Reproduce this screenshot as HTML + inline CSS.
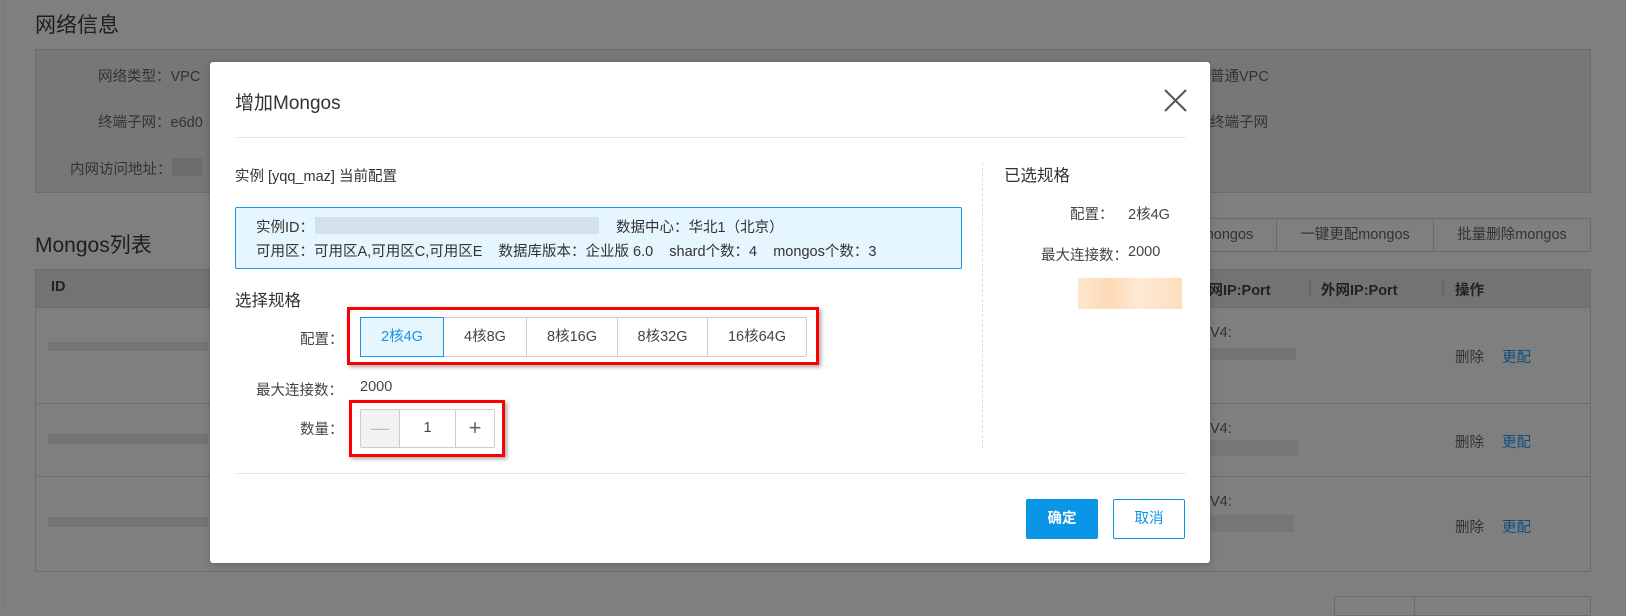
<!DOCTYPE html>
<html><head><meta charset="utf-8"><style>
*{margin:0;padding:0;box-sizing:border-box}
body{width:1626px;height:607px;overflow:hidden;background:#7f7f7f;font-family:"Liberation Sans","Noto Sans CJK SC",sans-serif;font-size:14.5px;color:#2a2a2a;position:relative}
.a{position:absolute;white-space:nowrap}
</style></head><body>
<div class="a" style="left:4px;top:0;width:1px;height:607px;background:#777"></div>
<div class="a" style="left:35px;top:9px;font-size:21px;color:#1e1e1e">网络信息</div>
<div class="a" style="left:35px;top:49px;width:1556px;height:144px;background:#777;border:1px solid #6c6c6c"></div>
<div class="a" style="left:98px;top:65px;color:#333">网络类型：VPC</div>
<div class="a" style="left:98px;top:111px;color:#333">终端子网：e6d0</div>
<div class="a" style="left:70px;top:158px;color:#333">内网访问地址：</div>
<div class="a" style="left:172px;top:158px;width:30px;height:18px;background:#6c6c6c"></div>
<div class="a" style="left:1210px;top:65px;color:#333">普通VPC</div>
<div class="a" style="left:1210px;top:111px;color:#333">终端子网</div>
<div class="a" style="left:35px;top:229px;font-size:21px;color:#1e1e1e">Mongos列表</div>
<div class="a" style="left:1120px;top:218px;width:157px;height:34px;border:1px solid #6a6a6a;text-align:center;line-height:32px;color:#333">批量增加mongos</div>
<div class="a" style="left:1276px;top:218px;width:158px;height:34px;border:1px solid #6a6a6a;text-align:center;line-height:32px;color:#333">一键更配mongos</div>
<div class="a" style="left:1433px;top:218px;width:158px;height:34px;border:1px solid #6a6a6a;text-align:center;line-height:32px;color:#333">批量删除mongos</div>
<div class="a" style="left:35px;top:269px;width:1556px;height:303px;border:1px solid #6c6c6c"></div>
<div class="a" style="left:36px;top:270px;width:1554px;height:38px;background:#737373;border-bottom:1px solid #6c6c6c"></div>
<div class="a" style="left:51px;top:279px;font-weight:bold;color:#222">ID</div>
<div class="a" style="left:1194px;top:279px;font-weight:bold;color:#222">内网IP:Port</div>
<div class="a" style="left:1309px;top:281px;width:2px;height:15px;background:#666"></div>
<div class="a" style="left:1321px;top:279px;font-weight:bold;color:#222">外网IP:Port</div>
<div class="a" style="left:1442px;top:281px;width:2px;height:15px;background:#666"></div>
<div class="a" style="left:1455px;top:279px;font-weight:bold;color:#222">操作</div>
<div class="a" style="left:36px;top:403px;width:1554px;height:1px;background:#6c6c6c"></div>
<div class="a" style="left:36px;top:476px;width:1554px;height:1px;background:#6c6c6c"></div>
<div class="a" style="left:48px;top:342px;width:160px;height:9px;background:#747474"></div>
<div class="a" style="left:48px;top:434px;width:160px;height:10px;background:#747474"></div>
<div class="a" style="left:48px;top:517px;width:160px;height:10px;background:#747474"></div>
<div class="a" style="left:1210px;top:325px;color:#333">V4:</div>
<div class="a" style="left:1210px;top:348px;width:86px;height:12px;background:#747474"></div>
<div class="a" style="left:1210px;top:421px;color:#333">V4:</div>
<div class="a" style="left:1210px;top:440px;width:88px;height:16px;background:#767676"></div>
<div class="a" style="left:1210px;top:494px;color:#333">V4:</div>
<div class="a" style="left:1210px;top:515px;width:84px;height:17px;background:#767676"></div>
<div class="a" style="left:1455px;top:346px;color:#333">删除</div><div class="a" style="left:1502px;top:346px;color:#0d4f80">更配</div>
<div class="a" style="left:1455px;top:431px;color:#333">删除</div><div class="a" style="left:1502px;top:431px;color:#0d4f80">更配</div>
<div class="a" style="left:1455px;top:516px;color:#333">删除</div><div class="a" style="left:1502px;top:516px;color:#0d4f80">更配</div>
<div class="a" style="left:1334px;top:596px;width:81px;height:20px;border:1px solid #6c6c6c"></div>
<div class="a" style="left:1414px;top:596px;width:177px;height:20px;border:1px solid #6c6c6c"></div>

<div class="a" style="left:210px;top:62px;width:1000px;height:501px;background:#fff;border-radius:3px;box-shadow:0 2px 8px rgba(0,0,0,.2)"></div>
<div class="a" style="left:235px;top:88px;font-size:19px;color:#333">增加Mongos</div>
<svg class="a" style="left:1164px;top:89px" width="23" height="23"><path d="M1 1L22 22M22 1L1 22" stroke="#555" stroke-width="2"/></svg>
<div class="a" style="left:235px;top:137px;width:951px;height:1px;background:#e8e8e8"></div>
<div class="a" style="left:235px;top:165px;color:#333">实例 [yqq_maz] 当前配置</div>
<div class="a" style="left:982px;top:163px;height:285px;border-left:1px dashed #ddd"></div>
<div class="a" style="left:1004px;top:162px;font-size:16.5px;color:#333">已选规格</div>
<div class="a" style="left:1070px;top:203px;color:#444">配置：</div><div class="a" style="left:1128px;top:203px;color:#444">2核4G</div>
<div class="a" style="left:1041px;top:244px;color:#444">最大连接数：</div><div class="a" style="left:1128px;top:244px;color:#444">2000</div>
<div class="a" style="left:1078px;top:278px;width:104px;height:31px;background:linear-gradient(90deg,#fde2c6,#fcd3a8 30%,#fde6cf 60%,#fdd7b0);opacity:.85"></div>
<div class="a" style="left:235px;top:207px;width:727px;height:62px;background:#e5f6fe;border:1px solid #1a93e3;border-radius:2px"></div>
<div class="a" style="left:256px;top:216px;color:#333">实例ID：</div>
<div class="a" style="left:315px;top:217px;width:284px;height:17px;background:#d3e1e8"></div>
<div class="a" style="left:616px;top:216px;color:#333">数据中心：华北1（北京）</div>
<div class="a" style="left:256px;top:240px;color:#333">可用区：可用区A,可用区C,可用区E &nbsp;&nbsp; 数据库版本：企业版 6.0 &nbsp;&nbsp; shard个数：4 &nbsp;&nbsp; mongos个数：3</div>
<div class="a" style="left:235px;top:287px;font-size:16.5px;color:#333">选择规格</div>
<div class="a" style="left:300px;top:328px;color:#444">配置：</div>
<div class="a" style="left:347px;top:307px;width:472px;height:58px;border:3px solid #f00;box-shadow:2px 2px 4px rgba(0,0,0,.35)"></div>
<div class="a" style="left:360px;top:317px;width:447px;height:40px;border:1px solid #ccc;border-radius:2px;display:flex;color:#444">
<div style="width:84px;background:#e5f6fe;border:1px solid #1a93e3;margin:-1px 0 -1px -1px;color:#1a93e3;text-align:center;line-height:38px">2核4G</div>
<div style="width:83px;border-right:1px solid #ccc;text-align:center;line-height:38px">4核8G</div>
<div style="width:91px;border-right:1px solid #ccc;text-align:center;line-height:38px">8核16G</div>
<div style="width:90px;border-right:1px solid #ccc;text-align:center;line-height:38px">8核32G</div>
<div style="flex:1;text-align:center;line-height:38px">16核64G</div></div>
<div class="a" style="left:256px;top:379px;color:#444">最大连接数：</div><div class="a" style="left:360px;top:379px;color:#444">2000</div>
<div class="a" style="left:300px;top:418px;color:#444">数量：</div>
<div class="a" style="left:349px;top:400px;width:156px;height:57px;border:3px solid #f00;box-shadow:2px 2px 4px rgba(0,0,0,.35)"></div>
<div class="a" style="left:360px;top:409px;width:135px;height:39px;border:1px solid #ccc;border-radius:2px;display:flex;color:#444">
<div style="width:39px;background:#f2f2f2;border-right:1px solid #ccc;text-align:center;line-height:37px;color:#bbb;font-size:18px">—</div>
<div style="width:56px;border-right:1px solid #ccc;text-align:center;line-height:37px">1</div>
<div style="flex:1;text-align:center;line-height:35px;font-size:22px;color:#666">+</div></div>
<div class="a" style="left:235px;top:473px;width:951px;height:1px;background:#e8e8e8"></div>
<div class="a" style="left:1026px;top:499px;width:72px;height:40px;background:#0b95e6;border-radius:2px;color:#fff;font-weight:bold;text-align:center;line-height:40px">确定</div>
<div class="a" style="left:1113px;top:499px;width:72px;height:40px;border:1px solid #0b95e6;border-radius:2px;color:#0b95e6;text-align:center;line-height:38px">取消</div>
</body></html>
